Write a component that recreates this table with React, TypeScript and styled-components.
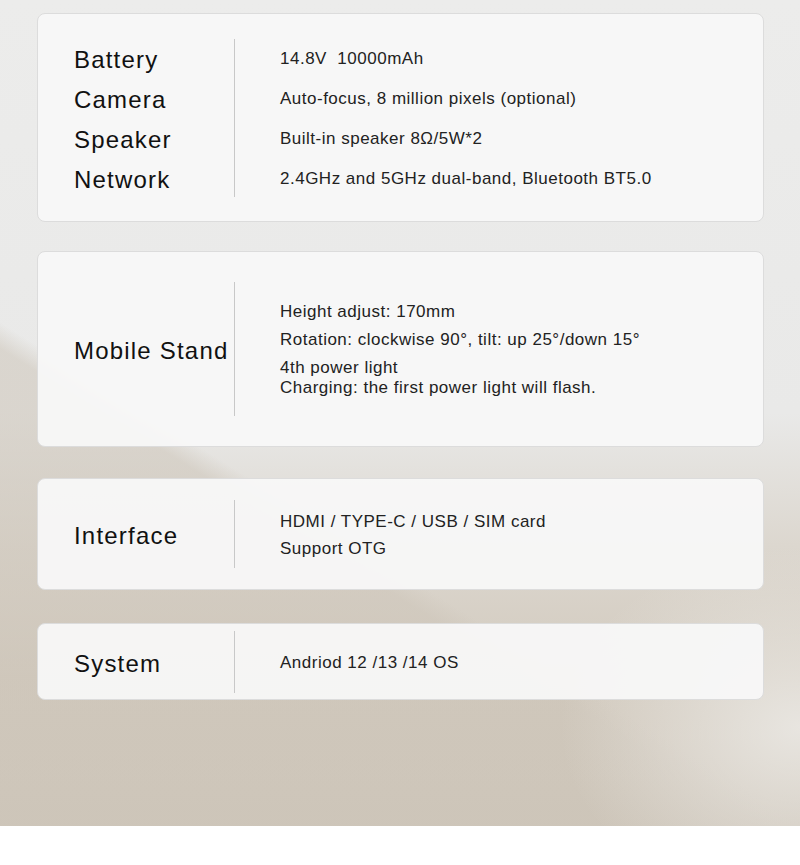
import styled, { createGlobalStyle } from "styled-components";

const GlobalStyle = createGlobalStyle`
  html, body {
    margin: 0;
    padding: 0;
    background: #ffffff;
  }
  body {
    font-family: "Liberation Sans", Arial, sans-serif;
  }
`;

type Spec = {
  labels: string[];
  values: string[][];
  top: number;
  height: number;
  line: number;
  gap: number;
  lift: number;
};

const specs: Spec[] = [
  {
    labels: ["Battery", "Camera", "Speaker", "Network"],
    values: [
      ["14.8V  10000mAh"],
      ["Auto-focus, 8 million pixels (optional)"],
      ["Built-in speaker 8Ω/5W*2"],
      ["2.4GHz and 5GHz dual-band, Bluetooth BT5.0"],
    ],
    top: 13,
    height: 209,
    line: 158,
    gap: 40,
    lift: 0,
  },
  {
    labels: ["Mobile Stand"],
    values: [
      ["Height adjust: 170mm"],
      ["Rotation: clockwise 90°, tilt: up 25°/down 15°"],
      ["4th power light", "Charging: the first power light will flash."],
    ],
    top: 29,
    height: 196,
    line: 134,
    gap: 28,
    lift: 6,
  },
  {
    labels: ["Interface"],
    values: [["HDMI / TYPE-C / USB / SIM card"], ["Support OTG"]],
    top: 31,
    height: 112,
    line: 68,
    gap: 27,
    lift: 0,
  },
  {
    labels: ["System"],
    values: [["Andriod 12 /13 /14 OS"]],
    top: 33,
    height: 77,
    line: 62,
    gap: 28,
    lift: 0,
  },
];

export default function App() {
  return (
    <>
      <GlobalStyle />
      <Page>
        {specs.map((s, i) => (
          <Card key={i} $top={s.top} $h={s.height}>
            <Labels>
              {s.labels.map((l) => (
                <Label key={l}>{l}</Label>
              ))}
            </Labels>
            <Divider $h={s.line} />
            <Values $lift={s.lift}>
              {s.values.map((v, j) =>
                v.length > 1 ? (
                  <Block key={j}>
                    {v.map((t) => (
                      <Value key={t}>{t}</Value>
                    ))}
                  </Block>
                ) : (
                  <Row key={j} $gap={s.gap}>
                    <Value>{v[0]}</Value>
                  </Row>
                )
              )}
            </Values>
          </Card>
        ))}
      </Page>
      <Footer />
    </>
  );
}

const Page = styled.div`
  box-sizing: border-box;
  height: 826px;
  padding: 0 36px 0 37px;
  display: flex;
  flex-direction: column;
  background:
    radial-gradient(ellipse 240px 180px at 100% 88%, rgba(236, 234, 230, 0.85), rgba(236, 234, 230, 0) 100%),
    linear-gradient(32deg, rgba(205, 197, 185, 0.55) 0%, rgba(205, 197, 185, 0.55) 36%, rgba(205, 197, 185, 0) 38%),
    linear-gradient(180deg, #ececeb 0%, #e9e9e8 50%, #dcd7cf 66%, #d2cabe 82%, #cec6ba 100%);
`;

const Card = styled.div<{ $top: number; $h: number }>`
  box-sizing: border-box;
  margin-top: ${(p) => p.$top}px;
  height: ${(p) => p.$h}px;
  flex: none;
  display: grid;
  grid-template-columns: 160px 1px 1fr;
  align-items: center;
  padding: 3px 0 0 36px;
  background: rgba(248, 248, 248, 0.94);
  border: 1px solid #dcdcdc;
  border-radius: 8px;
`;

const Labels = styled.div`
  display: flex;
  flex-direction: column;
  gap: 11px;
`;

const Label = styled.div`
  font-size: 24px;
  line-height: 29px;
  letter-spacing: 1.2px;
  color: #111111;
  white-space: nowrap;
`;

const Divider = styled.div<{ $h: number }>`
  height: ${(p) => p.$h}px;
  margin-top: -3px;
  background: #c8c8c8;
`;

const Values = styled.div<{ $lift: number }>`
  padding: 0 0 ${(p) => p.$lift}px 45px;
  display: flex;
  flex-direction: column;
`;

const Row = styled.div<{ $gap: number }>`
  height: ${(p) => p.$gap}px;
  display: flex;
  align-items: center;
`;

const Block = styled.div`
  padding-top: 4px;
  display: flex;
  flex-direction: column;
`;

const Value = styled.div`
  font-size: 17px;
  line-height: 20px;
  letter-spacing: 0.5px;
  color: #222222;
  white-space: pre;
`;

const Footer = styled.div`
  height: 39px;
  background: #ffffff;
`;
